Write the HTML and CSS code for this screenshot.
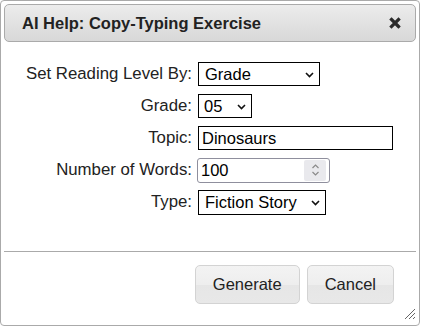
FILE: index.html
```html
<!DOCTYPE html>
<html lang="en">
<head>
  <meta charset="UTF-8">
  <meta name="viewport" content="width=device-width, initial-scale=1.0">
  <title>AI Help: Copy-Typing Exercise</title>
  <link rel="stylesheet" href="styles.css">
</head>
<body>
  <div class="dialog">
    <div class="titlebar">
      <span class="title">AI Help: Copy-Typing Exercise</span>
      <button class="close" title="Close">
        <svg width="12" height="12" viewBox="0 0 12 12">
          <path d="M2.5 2.5 L9.5 9.5 M9.5 2.5 L2.5 9.5" stroke="#2b2b2b" stroke-width="3.2" stroke-linecap="square" fill="none"/>
        </svg>
      </button>
    </div>

    <div class="content">
      <div class="form">
        <label class="label" for="level-by">Set Reading Level By:</label>
        <div class="field">
          <span class="select-wrap">
            <select id="level-by" class="select level-by">
              <option>Grade</option>
              <option>Lexile</option>
            </select>
            <svg class="chev" width="9" height="6" viewBox="0 0 9 6"><path d="M1 1 L4.5 4.5 L8 1" stroke="#111" stroke-width="1.6" fill="none"/></svg>
          </span>
        </div>

        <label class="label" for="grade">Grade:</label>
        <div class="field">
          <span class="select-wrap">
            <select id="grade" class="select grade">
              <option>05</option>
            </select>
            <svg class="chev" width="9" height="6" viewBox="0 0 9 6"><path d="M1 1 L4.5 4.5 L8 1" stroke="#111" stroke-width="1.6" fill="none"/></svg>
          </span>
        </div>

        <label class="label" for="topic">Topic:</label>
        <div class="field">
          <input id="topic" class="text topic" type="text" value="Dinosaurs">
        </div>

        <label class="label" for="words">Number of Words:</label>
        <div class="field">
          <span class="number-wrap">
            <input id="words" class="number words" type="number" value="100">
            <span class="spin">
              <svg width="9" height="16" viewBox="0 0 9 16">
                <path d="M1.5 6 L4.5 3 L7.5 6 M1.5 10 L4.5 13 L7.5 10" stroke="#8a8a8a" stroke-width="1.2" fill="none"/>
              </svg>
            </span>
          </span>
        </div>

        <label class="label" for="type">Type:</label>
        <div class="field">
          <span class="select-wrap">
            <select id="type" class="select type">
              <option>Fiction Story</option>
              <option>Non-Fiction</option>
            </select>
            <svg class="chev" width="9" height="6" viewBox="0 0 9 6"><path d="M1 1 L4.5 4.5 L8 1" stroke="#111" stroke-width="1.6" fill="none"/></svg>
          </span>
        </div>
      </div>
    </div>

    <div class="buttonpane">
      <button class="btn">Generate</button>
      <button class="btn">Cancel</button>
    </div>

    <span class="resize">
      <svg width="12" height="12" viewBox="0 0 12 12">
        <path d="M11 1 L1 11 M11 5 L5 11 M11 9 L9 11" stroke="#666" stroke-width="1" fill="none"/>
      </svg>
    </span>
  </div>
</body>
</html>
```

FILE: styles.css
```css
* {
  box-sizing: border-box;
}
body {
  margin: 0;
  background: #fff;
  font-family: "Liberation Sans", Arial, sans-serif;
  font-size: 16.5px;
  color: #222;
}
.dialog {
  position: relative;
  width: 420px;
  height: 326px;
  border: 1px solid #aaa;
  border-radius: 4px;
  padding: 3px;
  background: #fff;
}
.titlebar {
  display: flex;
  align-items: center;
  justify-content: space-between;
  height: 38px;
  padding: 0 12px 0 17px;
  border: 1px solid #aaa;
  border-radius: 5px;
  background: linear-gradient(#ececec, #d8d8d8);
}
.title {
  font-weight: bold;
  line-height: 20px;
  color: #222;
  padding-bottom: 1px;
}
.close {
  display: flex;
  align-items: center;
  justify-content: center;
  width: 16px;
  height: 16px;
  padding: 0;
  border: none;
  background: none;
  cursor: pointer;
}
.content {
  padding: 20px 0 0;
  height: 209px;
}
.form {
  display: grid;
  grid-template-columns: 188px 1fr;
  grid-auto-rows: 24px;
  column-gap: 6px;
  row-gap: 8px;
  align-items: center;
}
.label {
  text-align: right;
  white-space: nowrap;
  font-size: 16.8px;
}
.field {
  display: flex;
  align-items: center;
}
.select,
.text,
.number {
  font-family: "Liberation Sans", Arial, sans-serif;
  font-size: 16.5px;
  color: #000;
  background: #fff;
  margin: 0;
}
.select-wrap,
.number-wrap {
  position: relative;
  display: inline-flex;
}
.select {
  appearance: none;
  -webkit-appearance: none;
  height: 24px;
  border: 1px solid #000;
  border-radius: 0;
  padding: 0 20px 0 6px;
}
.chev {
  position: absolute;
  right: 6px;
  top: 50%;
  margin-top: -2px;
  pointer-events: none;
}
.level-by {
  width: 122px;
}
.grade {
  width: 54px;
  padding-left: 5px;
}
.type {
  width: 128px;
  height: 25px;
}
.text {
  height: 24px;
  border: 1px solid #000;
  border-radius: 0;
  padding: 0 3px;
}
.topic {
  width: 195px;
}
.number {
  -moz-appearance: textfield;
  height: 25px;
  border: 1px solid #8f8f9d;
  border-radius: 3px;
  padding: 0 3px;
}
.number::-webkit-inner-spin-button,
.number::-webkit-outer-spin-button {
  -webkit-appearance: none;
  margin: 0;
}
.words {
  width: 133px;
  margin-left: -1px;
}
.spin {
  position: absolute;
  right: 4px;
  top: 2px;
  width: 22px;
  height: 21px;
  display: flex;
  align-items: center;
  justify-content: center;
  background: #e9e9ed;
  border-radius: 2px;
  pointer-events: none;
}
.buttonpane {
  display: flex;
  justify-content: flex-end;
  gap: 7px;
  border-top: 1px solid #aaa;
  padding: 13px 22px 0 0;
}
.btn {
  font-family: "Liberation Sans", Arial, sans-serif;
  font-size: 16.5px;
  color: #222;
  height: 39px;
  padding: 0 17px;
  border: 1px solid #d3d3d3;
  border-radius: 5px;
  background: linear-gradient(#f3f3f3 0%, #eeeeee 50%, #e6e6e6 51%, #e8e8e8 100%);
  cursor: pointer;
}
.resize {
  position: absolute;
  right: 3px;
  bottom: 5px;
  width: 12px;
  height: 12px;
  display: block;
}
.resize svg {
  display: block;
}
```
